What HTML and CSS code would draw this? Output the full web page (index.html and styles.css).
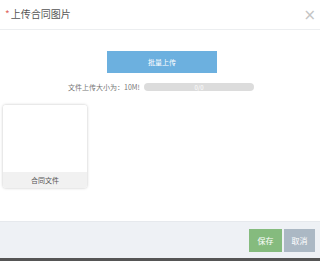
FILE: index.html
```html
<!DOCTYPE html>
<html lang="zh-CN">
<head>
    <meta charset="UTF-8">
    <title>上传合同图片</title>
    <link rel="stylesheet" href="styles.css">
</head>
<body>
    <div class="modal">
        <!-- Header -->
        <div class="modal-header">
            <h3 class="modal-title"><span class="required">*</span>上传合同图片</h3>
            <span class="close">&times;</span>
        </div>

        <!-- Body -->
        <div class="modal-body">
            <div class="upload-row">
                <button class="btn-upload">批量上传</button>
            </div>
            <div class="progress-row">
                <span class="size-tip">文件上传大小为：10M!</span>
                <div class="progress">
                    <span class="progress-text">0/0</span>
                </div>
            </div>
            <div class="file-list">
                <div class="file-card">
                    <div class="file-preview"></div>
                    <div class="file-name">合同文件</div>
                </div>
            </div>
        </div>

        <!-- Footer -->
        <div class="modal-footer">
            <button class="btn btn-save">保存</button>
            <button class="btn btn-cancel">取消</button>
        </div>
    </div>
</body>
</html>
```

FILE: styles.css
```css
* {
    margin: 0;
    padding: 0;
    box-sizing: border-box;
    font-family: "Microsoft YaHei", "Noto Sans CJK SC", sans-serif;
}

body {
    background-color: #555;
    width: 320px;
    height: 261px;
    overflow: hidden;
}

.modal {
    background-color: white;
    height: 258px;
    display: flex;
    flex-direction: column;
}

.modal-header {
    height: 30px;
    display: flex;
    align-items: center;
    justify-content: space-between;
    padding: 0 4px 0 5px;
    border-bottom: 1px solid #eceef0;
}

.modal-title {
    font-size: 10px;
    font-weight: normal;
    color: #555;
    line-height: 14px;
    margin-top: -2px;
}

.required {
    color: #e0675e;
    margin-right: 1px;
}

.close {
    font-size: 15px;
    color: #c4c4c4;
    line-height: 16px;
    font-family: "DejaVu Sans", sans-serif;
}

.modal-body {
    flex: 1;
    padding: 0 3px;
}

.upload-row {
    display: flex;
    justify-content: center;
    padding-top: 21px;
    padding-left: 4px;
}

.btn-upload {
    width: 110px;
    height: 22px;
    border: none;
    background-color: #6cb0df;
    color: white;
    font-size: 7px;
    cursor: pointer;
}

.progress-row {
    display: flex;
    align-items: center;
    margin-top: 9px;
    padding-left: 65px;
    height: 10px;
}

.size-tip {
    font-size: 7px;
    color: #777;
    width: 76px;
}

.progress {
    width: 110px;
    height: 8px;
    border-radius: 4px;
    background-color: #dcdcdc;
    display: flex;
    align-items: center;
    justify-content: center;
}

.progress-text {
    font-size: 6px;
    color: white;
}

.file-list {
    display: flex;
    margin-top: 13px;
}

.file-card {
    width: 84px;
    height: 83px;
    border-radius: 3px;
    box-shadow: 0 0 3px rgba(0, 0, 0, 0.25);
    display: flex;
    flex-direction: column;
    overflow: hidden;
}

.file-preview {
    flex: 1;
    background-color: white;
}

.file-name {
    height: 16px;
    background-color: #f1f1f1;
    font-size: 7px;
    color: #555;
    text-align: center;
    line-height: 16px;
}

.modal-footer {
    height: 37px;
    background-color: #eef1f5;
    border-top: 1px solid #e6e9ed;
    display: flex;
    justify-content: flex-end;
    align-items: center;
    gap: 2px;
    padding-right: 5px;
}

.btn {
    width: 33px;
    height: 23px;
    border: none;
    color: white;
    font-size: 8px;
    cursor: pointer;
}

.btn-save {
    background-color: #85bb7e;
}

.btn-cancel {
    width: 31px;
    background-color: #abb8c4;
}
```
